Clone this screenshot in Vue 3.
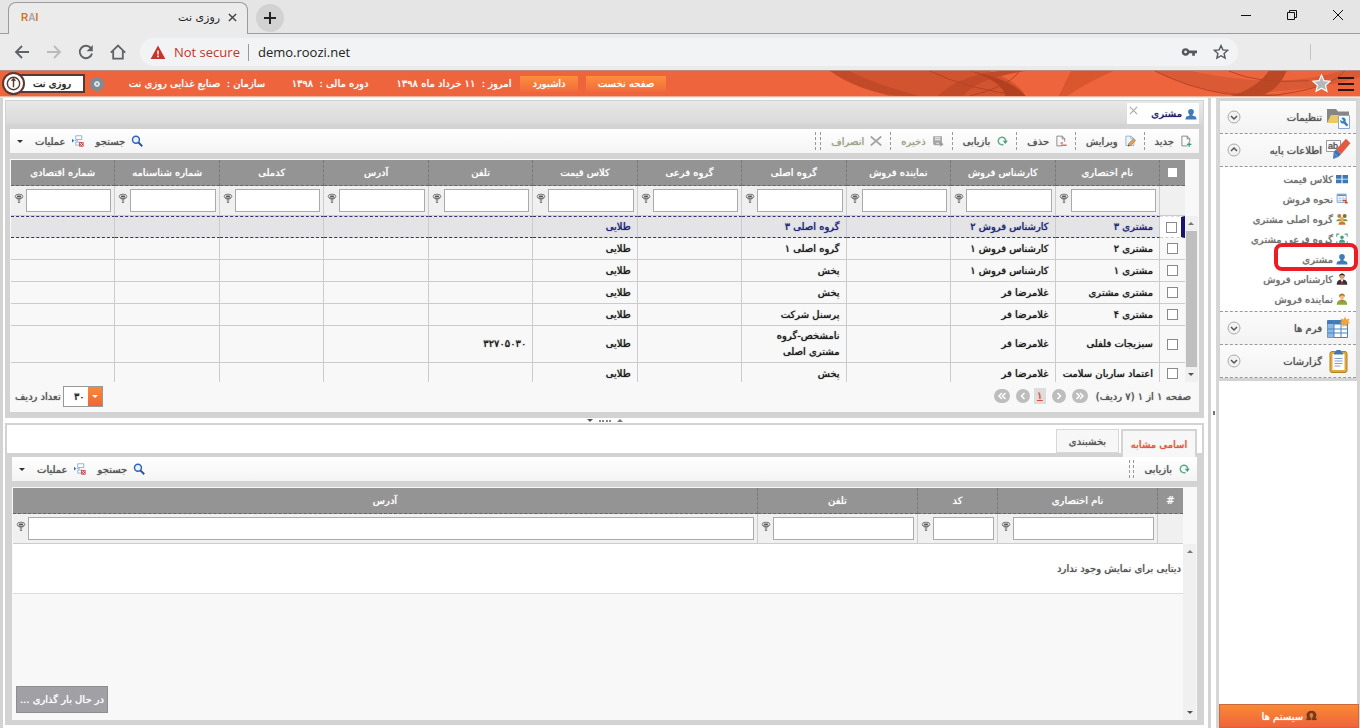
<script setup>
import { ref } from 'vue'

const icons = {
  back: '<path d="M15 8H2M8 2L2 8l6 6" fill="none" stroke="#5f6368" stroke-width="1.8"/>',
  forward: '<path d="M1 8h13M8 2l6 6-6 6" fill="none" stroke="#b8babc" stroke-width="1.8"/>',
  reload: '<path d="M13.2 4.6A6.2 6.2 0 1 0 14 9.5" fill="none" stroke="#5f6368" stroke-width="1.9"/><path d="M14.8 1v6.2H8.6z" fill="#5f6368"/>',
  home: '<path d="M.8 8.6L8 1.6l7.2 7M3.2 7v7.7h9.6V7" fill="none" stroke="#5f6368" stroke-width="1.8"/>',
  warning: '<path d="M8 1.5L15.4 15H.6z" fill="#c5352b"/><path d="M8 6.4v4M8 11.6v1.7" stroke="#fff" stroke-width="1.5"/>',
  key: '<path d="M4.6 4.2a3.8 3.8 0 1 0 3.6 5h3v2.6h2.7V9.2H16V6.6H8.2a3.8 3.8 0 0 0-3.6-2.4z" fill="#54585c"/><circle cx="4.6" cy="7.9" r="1.4" fill="#f1f3f4"/>',
  starLine: '<path d="M8 1.6l1.9 4.3 4.7.5-3.5 3.1 1 4.6L8 11.7l-4.1 2.4 1-4.6L1.4 6.4l4.7-.5z" fill="none" stroke="#54585c" stroke-width="1.4"/>',
  starFull: '<path d="M8 .9l2.1 4.7 5.2.5-3.9 3.4 1.2 5.1L8 11.9l-4.6 2.7 1.2-5.1L.7 6.1l5.2-.5z" fill="#b5b8bb" stroke="#fff" stroke-width="1"/>',
  user: '<circle cx="8" cy="5" r="3.8" fill="#3f7db8"/><path d="M6 7h4v3l4.6 1.6.9 3.6H.5l.9-3.6L6 10z" fill="#3f7db8"/>',
  add: '<path d="M10 14.5H2.5v-13h7.2l3.3 3.3v4.5M9.5 1.5v3.6H13" fill="none" stroke="#777" stroke-width="1.1"/><path d="M12.2 9.5v6M9.2 12.5h6" stroke="#3d9b6c" stroke-width="1.8"/>',
  edit: '<path d="M2.5 14V1.5h7L13 5v9z" fill="#eef5fc" stroke="#7ba3cf"/><path d="M9 1.5V5h4" fill="none" stroke="#7ba3cf"/><path d="M5.5 14.7l1-3.7 6.4-6 2.6 2.5-6.3 6.3z" fill="#e2a052" stroke="#9b6a34" stroke-width=".7"/><path d="M5.3 15l.6-2 1.6 1.3z" fill="#333"/>',
  remove: '<path d="M13 9V4.8L9.7 1.5H2.5v13H9M9.5 1.5v3.6H13" fill="none" stroke="#777" stroke-width="1.1"/><path d="M8 13.5h7.5M7.5 10.5h3" stroke="#e0704a" stroke-width="2"/>',
  refresh: '<path d="M10 12.6A5 5 0 1 1 13 8" fill="none" stroke="#5fae8d" stroke-width="2"/><path d="M9 7.5h6.8L12.4 12z" fill="#4d9c7b"/>',
  save: '<path d="M1.5 1.5h11.8v12H3l-1.5-1.4z" fill="#a6a6a6"/><path d="M4 3h7v4H4z" fill="#eee"/><path d="M4.5 5h6M5 9.5h5v3H5z" stroke="#999" fill="#ddd"/><path d="M11 9l4.5 3.2L11 15.5z" fill="#999"/>',
  cancel: '<path d="M1 2l14 12M15 2L1 14" stroke="#a5a5a5" stroke-width="2.2"/>',
  search: '<circle cx="6.6" cy="6.4" r="4.6" fill="#eaf3fc" stroke="#2f64ba" stroke-width="2"/><path d="M10 10l5 5" stroke="#2950a0" stroke-width="2.4"/>',
  actions: '<path d="M0 5l3 2.5L0 10z" fill="#3572b5"/><path d="M5 1h8v5H5zM5 9.5h6v4H5zM3.8 7.6H8" fill="#fff" stroke="#7c9cc4"/><path d="M9.5 9.5h6v6h-6z" fill="#c94444"/><path d="M10.8 10.8l3.5 3.5M14.3 10.8l-3.5 3.5" stroke="#fff"/>',
  funnel: '<ellipse cx="8" cy="4.6" rx="6.2" ry="3.6" fill="#ddd" stroke="#777" stroke-width="1.5"/><path d="M2.4 6.4L6.2 10v5h3.6v-5l3.8-3.6z" fill="#777"/><path d="M7.4 9.500h1.200v4.500h-1.200z" fill="#eee"/><path d="M5 4.4h6" stroke="#444" stroke-width="2"/>',
  price: '<path d="M0 2.5h7.3v5H0zM8.7 2.5H16v5H8.7zM0 8.8h7.3v5H0zM8.7 8.8H16v5H8.7z" fill="#3e78b3"/>',
  sellMode: '<path d="M1.5 1.5h12v11h-12z" fill="#fff" stroke="#5d88b8"/><path d="M2 3h11" stroke="#5d88b8" stroke-width="2"/><path d="M2 7h11M2 10h11M5.3 3v9.5M9.3 3v9.5" stroke="#9bb9d9" stroke-width=".8"/><path d="M9 10h4v3h2.6" fill="none" stroke="#d64532" stroke-width="1.8"/>',
  people: '<circle cx="4.4" cy="4" r="2.7" fill="#b7843e"/><circle cx="11.6" cy="4" r="2.7" fill="#8b6d30"/><path d="M.5 11c0-4 7.5-4 7.5 0zM8 11c0-4 7.5-4 7.5 0z" fill="#78a23c"/><circle cx="8" cy="8" r="2.7" fill="#e5ae5c"/><path d="M3.2 15.5c0-5.5 9.6-5.5 9.6 0z" fill="#d4743a"/>',
  subPeople: '<path d="M1 5V1.5h3.5M11.5 1.5H15V5M15 11v3.5h-3.5M4.5 14.5H1V11" fill="none" stroke="#5fa78e" stroke-width="1.5"/><circle cx="8" cy="5.8" r="2.4" fill="#4c9d80"/><path d="M3.8 13c0-5.6 8.4-5.6 8.4 0z" fill="#4c9d80"/>',
  expert: '<circle cx="8" cy="4.4" r="3.4" fill="#d69a72"/><path d="M4.3 4.5C3.8-.8 12.5-.8 11.8 4.5 10 2 6.5 2.3 4.3 4.5z" fill="#2b2020"/><path d="M1 15.5c0-5 2.3-7 7-7s7 2 7 7z" fill="#3b3036"/><path d="M6 8.6h4l-2 4z" fill="#fff"/><path d="M8 9.5l1.2 5.5H6.8z" fill="#c02f2f"/>',
  agent: '<circle cx="8" cy="5" r="3.3" fill="#f0bd83"/><path d="M4 5.4C3.4-.8 12.6-.8 12 5.4 10.5 2.4 6.7 2.8 4 5.4z" fill="#b5793a"/><path d="M1 15.5C1 11 3.5 9 8 9s7 2 7 6.5z" fill="#86aa3d"/><path d="M6 9h4l-2 3.6z" fill="#e2594a"/>',
  settings: '<path d="M1 4h9l2 2.5h11V18H1z" fill="#868686"/><path d="M1 18l4-8h10v8z" fill="#ecc95f"/><path d="M12.5 10.5h11v13h-11z" fill="#f8fbff" stroke="#8aa9cc"/><path d="M15.3 13.2a2.8 2.8 0 0 1 4.2 3.5l2.8 3.3-1.6 1.6-3-3.1a2.8 2.8 0 0 1-3.3-3.7l2 1.6 1.1-1z" fill="#3d7ab8"/>',
  base: '<path d="M.5 2.5h14v11H.5z" fill="#fff" stroke="#999"/><text x="2" y="11" direction="ltr" font-size="9" font-family="Liberation Sans" fill="#555">ab</text><path d="M20 .8l4.4 4.5-9.4 11-5-4.8z" fill="#e35a40"/><path d="M10 11.500l5 4.800-2.600 2.600-4.800-4.600z" fill="#3f73b3"/><path d="M7.600 14.300l4.800 4.600L7 21z" fill="#4b7fc0"/>',
  forms: '<path d="M1.5 4.5h20v17h-20z" fill="#fff" stroke="#4d83bd"/><path d="M1.5 4.5h20v4h-20z" fill="#3e7bbc"/><path d="M1.5 8.5h6.5v13H1.5z" fill="#8db9e6"/><path d="M1.5 13h20M1.5 17h20M8 4.5v17M15 4.5v17" stroke="#4d83bd"/><path d="M19 .5l1.4 3 3-1-1 3 1.6 1.5-3 .9.3 3.1L19 9.4 16.5 11l.2-3.1-3-.9 2-1.5-1-3 3 1z" fill="#f0a53a"/>',
  reports: '<rect x="4" y="2.5" width="17" height="21" rx="2" fill="#e0a93c" stroke="#b58124"/><path d="M6.5 5h12v16h-12z" fill="#fff"/><path d="M8.5 9.5h8M8.5 12h8M8.5 14.5h8M8.5 17h6" stroke="#7fa3cc"/><path d="M8 5.5c0-2.6 2-2.5 2.5-4.5h4c.5 2 2.500 1.900 2.500 4.500z" fill="#3f78b5"/>',
}

const activeItem = ref('مشتری')
const pageSize = ref('۳۰')

const baseItems = [
  { icon: 'price', title: 'کلاس قیمت' },
  { icon: 'sellMode', title: 'نحوه فروش' },
  { icon: 'people', title: 'گروه اصلی مشتری' },
  { icon: 'subPeople', title: 'گروه فرعی مشتری' },
  { icon: 'user', title: 'مشتری' },
  { icon: 'expert', title: 'کارشناس فروش' },
  { icon: 'agent', title: 'نماینده فروش' },
]

const menu = [
  { icon: 'settings', title: 'تنظیمات' },
  { icon: 'base', title: 'اطلاعات پایه', items: baseItems },
  { icon: 'forms', title: 'فرم ها' },
  { icon: 'reports', title: 'گزارشات' },
]

const tools = [
  { icon: 'add', title: 'جدید' },
  { icon: 'edit', title: 'ویرایش' },
  { icon: 'remove', title: 'حذف' },
  { icon: 'refresh', title: 'بازیابی' },
  { icon: 'save', title: 'ذخیره', disabled: true },
  { icon: 'cancel', title: 'انصراف', disabled: true },
]

const columns = ['نام اختصاری', 'کارشناس فروش', 'نماینده فروش', 'گروه اصلی', 'گروه فرعی', 'کلاس قیمت', 'تلفن', 'آدرس', 'کدملی', 'شماره شناسنامه', 'شماره اقتصادی']

// name, expert, main group, phone
const rows = [
  ['مشتری ۳', 'کارشناس فروش ۲', 'گروه اصلی ۳', ''],
  ['مشتری ۲', 'کارشناس فروش ۱', 'گروه اصلی ۱', ''],
  ['مشتری ۱', 'کارشناس فروش ۱', 'پخش', ''],
  ['مشتری مشتری', 'غلامرضا فر', 'پخش', ''],
  ['مشتری ۴', 'غلامرضا فر', 'پرسنل شرکت', ''],
  ['سبزیجات فلفلی', 'غلامرضا فر', 'نامشخص-گروه مشتری اصلی', '۳۲۷۰۵۰۳۰'],
  ['اعتماد ساربان سلامت', 'غلامرضا فر', 'پخش', ''],
].map(([name, expert, group, phone]) => [name, expert, '', group, '', 'طلایی', phone, '', '', '', ''])

const similarColumns = ['نام اختصاری', 'کد', 'تلفن', 'آدرس']
</script>

<template>
  <div class="window">
    <header class="browser">
      <div class="tabStrip">
        <div class="browserTab">
          <span class="favicon">R<i>A</i>I</span>
          <span class="tabTitle" dir="rtl">روزی نت</span>
          <button class="closeTab" aria-label="Close tab">
            <svg viewBox="0 0 10 10"><path d="M1 1l8 8M9 1L1 9" stroke="#444" stroke-width="1.6" /></svg>
          </button>
        </div>
        <button class="newTab" aria-label="New tab">
          <svg viewBox="0 0 12 12"><path d="M6 0v12M0 6h12" stroke="#222" stroke-width="2" /></svg>
        </button>
        <div class="windowButtons">
          <button aria-label="Minimize"><svg viewBox="0 0 12 12"><path d="M1 6.5h10" stroke="#111" /></svg></button>
          <button aria-label="Restore"><svg viewBox="0 0 12 12"><path d="M1.5 3.5h7v7h-7zM3.5 3.5v-2h7v7h-2" fill="none" stroke="#111" /></svg></button>
          <button aria-label="Close"><svg viewBox="0 0 12 12"><path d="M1 1l10 10M11 1L1 11" stroke="#111" /></svg></button>
        </div>
      </div>
      <div class="addressRow">
        <button v-for="name in ['back', 'forward', 'reload', 'home']" :key="name" class="navButton" :aria-label="name">
          <svg viewBox="0 0 16 16" v-html="icons[name]"></svg>
        </button>
        <div class="omnibox">
          <svg viewBox="0 0 16 16" v-html="icons.warning"></svg>
          <label class="notSecure" for="url">Not secure</label>
          <input id="url" class="url" type="text" value="demo.roozi.net">
          <svg class="key" viewBox="0 0 16 16" v-html="icons.key"></svg>
          <svg viewBox="0 0 16 16" v-html="icons.starLine"></svg>
        </div>
        <span class="profileLine"></span>
      </div>
    </header>

    <div class="topbar">
      <svg class="waves" viewBox="0 0 532 26" preserveAspectRatio="none">
        <path d="M0 0h160q30 12 36 26H60Q30 18 0 0z" fill="#d2532f" />
        <path d="M0 0q30 22 70 26h20Q40 12 20 0zM108 26Q130 4 170 0h26q-50 8-62 26z" fill="#c34a29" />
        <path d="M140 0q42 8 56 26h-20Q172 10 140 0zM230 26l12-26h10l-14 26z" fill="#b3411f" />
        <path d="M100 0q40 20 96 26M140 26Q180 16 190 0" fill="none" stroke="#b04422" />
        <path d="M242 0h42q-26 12-46 26h-8z" fill="#d9562f" />
        <path d="M326 0q60 30 130 26-70-6-100-26z" fill="#cf502d" />
        <path d="M326 0q50 28 110 22 60-4 96-16V0h-20q-60 20-150 0z" fill="#da5a35" />
        <path d="M402 26Q428 18 440 0h18q-8 20-26 26z" fill="#bb4725" />
        <path d="M326 0q70 36 140 22 40-8 50-22M400 0q30 14 80 10" fill="none" stroke="#b34626" />
      </svg>
      <div class="brand">
        <span class="power"><svg viewBox="0 0 20 20"><circle cx="10" cy="10" r="6.500" fill="none" stroke="#5a3832" stroke-width="1.5" /><path d="M10 5v9M8 7l2-2 2 2" fill="none" stroke="#5a3832" stroke-width="1.5" /></svg></span>
        <span class="brandName">روزی نت</span>
      </div>
      <span class="gear"></span>
      <span class="info org">سازمان :&nbsp; صنایع غذایی روزی نت</span>
      <span class="info year">دوره مالی :&nbsp; ۱۳۹۸</span>
      <span class="info today">امروز :&nbsp; ۱۱ خرداد ماه ۱۳۹۸</span>
      <button class="topButton">داشبورد</button>
      <button class="topButton wide">صفحه نخست</button>
      <button class="favorite" aria-label="Favorite"><svg viewBox="0 0 16 16" v-html="icons.starFull"></svg></button>
      <button class="burger" aria-label="Menu"><i></i><i></i><i></i></button>
    </div>

    <div class="workspace">
      <aside class="sidebar">
        <nav class="menu">
          <template v-for="group in menu" :key="group.title">
            <button class="group">
              <svg class="groupIcon" viewBox="0 0 25 25" v-html="icons[group.icon]"></svg>
              <span>{{ group.title }}</span>
              <svg class="toggle" :class="{ open: group.items }" viewBox="0 0 14 14"><circle cx="7" cy="7" r="6" fill="#f2f2f2" stroke="#aaa" /><path d="M4 6l3 3 3-3" fill="none" stroke="#555" stroke-width="1.5" /></svg>
            </button>
            <ul v-if="group.items" class="subMenu">
              <li v-for="item in group.items" :key="item.title" :class="{ marked: item.title === activeItem }">
                <a href="#" @click.prevent="activeItem = item.title"><svg viewBox="0 0 16 16" v-html="icons[item.icon]"></svg>{{ item.title }}</a>
              </li>
            </ul>
          </template>
        </nav>
        <button class="systems"><b>Ω</b> سیستم ها</button>
      </aside>

      <div class="sideSplitter"><i></i></div>

      <main class="content">
        <section class="panel upper">
          <div class="docTabs">
            <div class="docTab">
              <svg viewBox="0 0 16 16" v-html="icons.user"></svg>
              <span>مشتری</span>
              <button aria-label="بستن"><svg viewBox="0 0 10 10"><path d="M1 1l8 8M9 1L1 9" stroke="#aaa" stroke-width="1.3" /></svg></button>
            </div>
          </div>
          <div class="frame">
            <div class="toolbar">
              <button v-for="tool in tools" :key="tool.title" class="tool" :disabled="tool.disabled">
                <svg viewBox="0 0 16 16" v-html="icons[tool.icon]"></svg>{{ tool.title }}
              </button>
              <span class="grip"></span>
              <div class="leftTools">
                <button class="tool plain"><svg viewBox="0 0 16 16" v-html="icons.search"></svg>جستجو</button>
                <button class="tool plain"><svg viewBox="0 0 16 16" v-html="icons.actions"></svg>عملیات<i class="caret"></i></button>
              </div>
            </div>

            <div class="gridBox">
              <table class="grid headGrid">
                <colgroup><col class="checkCol"><col v-for="c in columns" :key="c"></colgroup>
                <thead>
                  <tr>
                    <th><input type="checkbox" class="check solid" aria-label="انتخاب همه"></th>
                    <th v-for="c in columns" :key="c">{{ c }}</th>
                  </tr>
                  <tr class="filters">
                    <td></td>
                    <td v-for="c in columns" :key="c">
                      <div class="filter"><input type="text" :aria-label="c"><svg viewBox="0 0 16 16" v-html="icons.funnel"></svg></div>
                    </td>
                  </tr>
                </thead>
              </table>
              <div class="scrollArea">
                <div class="scrollbar"><i class="up"></i><span class="thumb"></span><i class="down"></i></div>
                <div class="rowsClip">
                  <table class="grid bodyGrid">
                    <colgroup><col class="checkCol"><col v-for="c in columns" :key="c"></colgroup>
                    <tbody>
                      <tr v-for="(row, index) in rows" :key="index" :class="{ selected: index === 0 }">
                        <td class="checkCell"><input type="checkbox" class="check" :aria-label="row[0]"></td>
                        <td v-for="(cell, i) in row" :key="i">{{ cell }}</td>
                      </tr>
                    </tbody>
                  </table>
                </div>
              </div>
              <footer class="pager">
                <span class="pageInfo">صفحه ۱ از ۱ (۷ ردیف)</span>
                <button class="pageButton" aria-label="صفحه اول"><svg viewBox="0 0 12 12"><path d="M2.5 3l3 3-3 3M6 3l3 3-3 3" /></svg></button>
                <button class="pageButton small" aria-label="صفحه قبل"><svg viewBox="0 0 12 12"><path d="M4.5 3l3 3-3 3" /></svg></button>
                <a href="#" class="pageNumber">۱</a>
                <button class="pageButton small" aria-label="صفحه بعد"><svg viewBox="0 0 12 12"><path d="M7.5 3l-3 3 3 3" /></svg></button>
                <button class="pageButton" aria-label="صفحه آخر"><svg viewBox="0 0 12 12"><path d="M6 3L3 6l3 3M9.5 3l-3 3 3 3" /></svg></button>
                <div class="pageSize">
                  <span class="selectBox">
                    <select id="pageSize" v-model="pageSize"><option>۳۰</option><option>۵۰</option></select>
                    <i class="selectArrow"></i>
                  </span>
                  <label for="pageSize">تعداد ردیف</label>
                </div>
              </footer>
            </div>
          </div>
        </section>

        <div class="splitter"><i class="up"></i><span></span><i class="down"></i></div>

        <section class="panel lower">
          <div class="lowerTabs">
            <button class="lowerTab active">اسامی مشابه</button>
            <button class="lowerTab">بخشبندی</button>
          </div>
          <div class="frame lowerFrame">
            <div class="toolbar">
              <button class="tool plain"><svg viewBox="0 0 16 16" v-html="icons.refresh"></svg>بازیابی</button>
              <span class="grip double"></span>
              <div class="leftTools">
                <button class="tool plain"><svg viewBox="0 0 16 16" v-html="icons.search"></svg>جستجو</button>
                <button class="tool plain"><svg viewBox="0 0 16 16" v-html="icons.actions"></svg>عملیات<i class="caret"></i></button>
              </div>
            </div>
            <div class="gridBox lowerBox">
              <table class="grid headGrid">
                <colgroup><col class="checkCol"><col class="nameCol"><col class="codeCol"><col class="nameCol"><col></colgroup>
                <thead>
                  <tr><th>#</th><th v-for="c in similarColumns" :key="c">{{ c }}</th></tr>
                  <tr class="filters">
                    <td></td>
                    <td v-for="c in similarColumns" :key="c">
                      <div class="filter"><input type="text" :aria-label="c"><svg viewBox="0 0 16 16" v-html="icons.funnel"></svg></div>
                    </td>
                  </tr>
                </thead>
              </table>
              <div class="scrollArea">
                <div class="scrollbar wideBar"><i class="up"></i><i class="down"></i></div>
                <p class="empty">دیتایی برای نمایش وجود ندارد</p>
              </div>
            </div>
          </div>
          <div class="loading">در حال بار گذاری ...</div>
        </section>
      </main>
    </div>
  </div>
</template>

<style>
body {
  margin: 0;
  overflow: hidden;
}
</style>

<style scoped>
*,
*::before,
*::after {
  box-sizing: border-box;
}

.window {
  height: 100vh;
  display: flex;
  flex-direction: column;
  background: #fff;
  font-family: "DejaVu Sans", sans-serif;
  font-size: 10px;
  color: #555;
}

.topbar,
.workspace {
  text-shadow: 0 0 1px currentColor;
}

button {
  font: inherit;
  color: inherit;
  text-shadow: inherit;
  background: none;
  border: 0;
  padding: 0;
}

svg {
  display: block;
  flex: none;
}

/* browser chrome */
.browser {
  flex: none;
  background: #ebebeb;
}

.tabStrip {
  height: 34px;
  padding: 2px 16px 0 8px;
  display: flex;
  align-items: center;
  background: #e5e5e5;
  border-bottom: 1px solid #9b9ba0;
}

.browserTab {
  width: 240px;
  height: 32px;
  align-self: flex-start;
  display: flex;
  align-items: center;
  padding: 0 10px 2px 12px;
  background: #ebebeb;
  border: 1px solid #9b9ba0;
  border-bottom: 0;
  border-radius: 8px 8px 0 0;
}

.favicon {
  font: bold 10px "Liberation Sans", sans-serif;
  color: #d9731c;
}

.favicon i {
  color: #aaa;
  font-style: normal;
}

.tabTitle {
  margin-left: auto;
  font-size: 11px;
  color: #222;
}

.closeTab {
  margin-left: 8px;
}

.closeTab svg {
  width: 9px;
  height: 9px;
}

.newTab {
  width: 28px;
  height: 28px;
  margin-left: 8px;
  border-radius: 50%;
  background: #d2d2d2;
  display: grid;
  place-items: center;
}

.newTab svg {
  width: 12px;
  height: 12px;
}

.windowButtons {
  margin-left: auto;
  display: flex;
  gap: 34px;
  padding-bottom: 6px;
}

.windowButtons svg {
  width: 12px;
  height: 12px;
}

.addressRow {
  height: 36px;
  display: flex;
  align-items: center;
  padding-left: 14px;
}

.navButton {
  margin-right: 16px;
}

.navButton svg {
  width: 16px;
  height: 16px;
}

.omnibox {
  flex: 1;
  height: 28px;
  margin-left: -2px;
  padding: 0 9px 0 10px;
  display: flex;
  align-items: center;
  background: #f1f3f4;
  border-radius: 14px;
  font: 13px "Open Sans", sans-serif;
}

.omnibox svg {
  width: 16px;
  height: 16px;
}

.notSecure {
  margin-left: 8px;
  padding-right: 8px;
  border-right: 1px solid #999;
  line-height: 17px;
  color: #c5352b;
}

.url {
  flex: 1;
  margin-left: 9px;
  border: 0;
  padding: 0;
  background: none;
  font: inherit;
  color: #222;
}

.omnibox .key {
  margin-right: 16px;
}

.profileLine {
  width: 1px;
  height: 16px;
  margin: 0 49px 0 72px;
  background: #c4c4c8;
}

/* orange bar */
.topbar {
  flex: none;
  height: 27px;
  display: flex;
  align-items: center;
  position: relative;
  padding: 0 6px 0 2px;
  background: #ee643c;
  border-top: 1px solid #b9897c;
  border-bottom: 1px solid #e9b5a4;
  color: #fff;
}

.topbar > * {
  position: relative;
}

.topbar .waves {
  position: absolute;
  top: 0;
  right: 0;
  width: 39%;
  height: 25px;
}

.brand {
  width: 83px;
  display: flex;
  align-items: center;
}

.power {
  z-index: 1;
  width: 23px;
  height: 23px;
  border: 2px solid #5a3832;
  border-radius: 50%;
  background: #fff;
}

.brandName {
  flex: 1;
  height: 19px;
  margin-left: -6px;
  border: 2px solid #5a3832;
  background: #fff;
  color: #222;
  line-height: 15px;
  text-align: center;
}

.gear {
  width: 14px;
  height: 14px;
  margin: 0 24px 0 5px;
  border: 4px solid #7d8b96;
  border-radius: 50%;
  background: #8b8f90;
  box-shadow: inset 0 0 0 2px #dce4ea;
}

.info {
  direction: rtl;
  white-space: nowrap;
  text-align: center;
}

.org {
  width: 138px;
}

.year {
  width: 80px;
  margin-left: 24px;
}

.today {
  width: 120px;
  margin: 0 6px 0 24px;
}

.topButton {
  width: 58px;
  height: 16px;
  margin-right: 8px;
  background: linear-gradient(#fb8f3d, #f2693b);
}

.topButton.wide {
  width: 80px;
}

.favorite {
  margin-left: auto;
}

.favorite svg {
  width: 19px;
  height: 19px;
}

.burger {
  width: 16px;
  margin-left: 7px;
  display: grid;
  gap: 4px;
}

.burger i {
  height: 2px;
  background: #2d1712;
}

/* layout */
.workspace {
  flex: 1;
  min-height: 0;
  display: flex;
  direction: rtl;
  border-top: 1px solid #e8e8e8;
}

.sidebar {
  width: 144px;
  flex: none;
  display: flex;
  flex-direction: column;
  border: solid #d6d6d6;
  border-width: 0 3px;
}

.menu {
  border: solid #d3d3d3;
  border-width: 3px 1px;
}

.group {
  width: 100%;
  height: 33px;
  padding: 0 5px 0 7px;
  display: flex;
  align-items: center;
  background: linear-gradient(#fbfbfb, #f3f3f3);
  border-bottom: 1px dashed #999;
}

.groupIcon {
  width: 25px;
  height: 25px;
  margin-left: 4px;
}

.toggle {
  width: 14px;
  height: 14px;
  margin-right: auto;
}

.toggle.open {
  transform: rotate(180deg);
}

.subMenu {
  list-style: none;
  margin: 0;
  padding: 2px 0;
  border-bottom: 1px dashed #999;
}

.subMenu li {
  height: 20px;
  padding-right: 8px;
  position: relative;
}

.subMenu a {
  display: flex;
  align-items: center;
  gap: 3px;
  height: 20px;
  color: #707070;
  text-decoration: none;
  white-space: nowrap;
}

.subMenu svg {
  width: 12px;
  height: 12px;
}

.marked::after {
  content: "";
  position: absolute;
  z-index: 2;
  top: -6px;
  right: -2px;
  width: 84px;
  height: 28px;
  border: 4px solid #ea1c24;
  border-radius: 8px;
}

.systems {
  height: 24px;
  margin: auto -2px 0 0;
  background: linear-gradient(#f98a35, #f0633b);
  border: 1px solid #c96a3c;
  color: #fff;
}

.systems b {
  color: #70381c;
  font-size: 12px;
}

.sideSplitter {
  width: 8px;
  flex: none;
  display: flex;
  align-items: center;
  justify-content: center;
  border-left: 3px solid #d3d3d3;
}

.sideSplitter i {
  width: 2px;
  height: 4px;
  background: #777;
}

.content {
  flex: 1;
  min-width: 0;
  display: flex;
  flex-direction: column;
  padding: 2px 4px 3px 2px;
  border-left: 3px solid #d3d3d3;
}

.panel {
  border: 1px solid #d3d3d3;
}

.docTabs {
  height: 23px;
  display: flex;
  padding: 2px 4px 0;
  background: linear-gradient(#e8e8e8, #d9d9d9);
}

.docTab {
  width: 72px;
  display: flex;
  align-items: center;
  padding: 0 2px;
  background: #fff;
  color: #1f1b69;
}

.docTab > svg {
  width: 12px;
  height: 12px;
  margin-left: 3px;
}

.docTab button {
  margin: 0 auto 7px 0;
}

.docTab button svg {
  width: 9px;
  height: 9px;
}

.frame {
  padding: 5px 4px;
  background: #d3d3d3;
}

.toolbar {
  height: 24px;
  display: flex;
  align-items: center;
  padding: 0 7px;
  background: linear-gradient(#fff, #f4f4f4);
}

.tool {
  height: 18px;
  display: flex;
  align-items: center;
  gap: 6px;
  padding: 0 8px 0 10px;
  border-left: 1px dashed #999;
}

.tool:first-child {
  padding-right: 0;
}

.tool:disabled {
  color: #9ba58a;
}

.tool.plain {
  border-left: 0;
}

.tool svg {
  width: 12px;
  height: 12px;
}

.grip {
  width: 5px;
  height: 18px;
  border-left: 1px dashed #999;
}

.grip.double {
  border-right: 1px dashed #999;
}

.leftTools {
  margin-right: auto;
  display: flex;
}

.leftTools .tool {
  padding: 0 12px 0 0;
}

.caret {
  margin-right: 6px;
  border: 3px solid transparent;
  border-top-color: #333;
  border-bottom: 0;
}

/* grids */
.gridBox {
  margin-top: 6px;
  padding: 1px 1px 0;
  background: #f8f8f8;
}

.grid {
  table-layout: fixed;
  border-collapse: separate;
  border-spacing: 0;
}

.headGrid {
  width: calc(100% - 13px);
  margin-right: 13px;
}

.bodyGrid {
  width: 100%;
}

.checkCol {
  width: 25px;
}

.nameCol {
  width: 160px;
}

.codeCol {
  width: 80px;
}

.grid th {
  height: 26px;
  padding: 0;
  background: #949494;
  color: #fff;
  font-weight: normal;
  border-bottom: 1px dashed #666;
}

.grid th + th {
  border-right: 1px dashed #777;
}

.grid td {
  padding: 0 6px;
  border-bottom: 1px solid #ccc;
}

.grid td + td {
  border-right: 1px solid #ccc;
}

.grid .filters td {
  height: 30px;
  padding: 0 3px;
  background: #f0f0f0;
}

.filter {
  display: flex;
  align-items: center;
  gap: 2px;
}

.filter input {
  flex: 1;
  min-width: 0;
  height: 23px;
  border: 1px solid #aaa;
  background: #fff;
}

.filter svg {
  width: 10px;
  height: 11px;
  margin-bottom: 5px;
}

.check {
  appearance: none;
  display: block;
  width: 11px;
  height: 11px;
  margin: 0 auto;
  border: 1px solid #8a8a8a;
  background: #fff;
}

.check.solid {
  width: 9px;
  height: 9px;
  border-color: #fff;
}

.scrollArea {
  display: flex;
}

.rowsClip {
  flex: 1;
  min-width: 0;
  height: 166px;
  overflow: hidden;
}

.bodyGrid td {
  height: 22px;
  color: #1c1c1c;
  line-height: 16px;
}

.grid .checkCell {
  padding: 0 2px;
}

.bodyGrid tr:nth-child(6) td {
  height: 37px;
}

.bodyGrid .selected td {
  background: #e4e4e6;
  color: #1e2478;
  border-top: 1px dashed #33336f;
  border-bottom: 1px dashed #33336f;
}

.bodyGrid .selected .checkCell {
  padding-right: 0;
  background: #fff;
  border-top-color: #ddd;
  border-bottom-color: #ccc;
  border-right: 4px solid #16166e;
}

.scrollbar {
  width: 13px;
  flex: none;
  display: flex;
  flex-direction: column;
  align-items: center;
  justify-content: space-between;
  padding: 6px 1px 6px 0;
  background: #f0f0f0;
}

.thumb {
  flex: 1;
  width: 11px;
  margin: 6px 0;
  background: #bfbfbf;
}

.up,
.down {
  border: 3px solid transparent;
}

.up {
  border-top: 0;
  border-bottom-color: #777;
}

.down {
  border-bottom: 0;
  border-top-color: #555;
}

.pager {
  height: 30px;
  display: flex;
  align-items: center;
  padding: 0 7px 2px 4px;
}

.pageInfo {
  margin-left: 8px;
}

.pageButton {
  width: 16px;
  height: 14px;
  margin-left: 6px;
  border-radius: 7px;
  background: #bdbdbd;
}

.pageButton.small {
  width: 14px;
}

.pageButton svg {
  width: 12px;
  height: 12px;
  margin: 0 auto;
  fill: none;
  stroke: #fff;
  stroke-width: 1.5;
}

.pageNumber {
  width: 12px;
  height: 16px;
  margin-left: 4px;
  background: #ddd;
  color: #dd4b39;
  line-height: 16px;
  text-align: center;
}

.pageSize {
  margin-right: auto;
  display: flex;
  align-items: center;
}

.selectBox {
  position: relative;
  margin-left: 2px;
}

.selectBox select {
  appearance: none;
  display: block;
  width: 40px;
  height: 21px;
  padding: 0 17px 0 0;
  border: 1px solid #999;
  border-radius: 0;
  background: #fff;
  font: inherit;
  color: #222;
  text-shadow: inherit;
}

.selectArrow {
  position: absolute;
  top: 1px;
  right: 1px;
  width: 14px;
  height: 19px;
  background: linear-gradient(#f98a35, #f0633b);
  pointer-events: none;
}

.selectArrow::after {
  content: "";
  position: absolute;
  top: 8px;
  left: 4px;
  border: 3px solid transparent;
  border-top-color: #fff;
  border-bottom: 0;
}

.splitter {
  height: 5px;
  flex: none;
  display: flex;
  align-items: center;
  justify-content: center;
  gap: 6px;
}

.splitter span {
  width: 12px;
  border-top: 2px dotted #888;
}

/* lower panel */
.lower {
  flex: 1;
  min-height: 0;
  display: flex;
  flex-direction: column;
  position: relative;
  border-width: 2px;
}

.lowerTabs {
  height: 32px;
  flex: none;
  display: flex;
  align-items: flex-start;
  gap: 2px;
  padding: 4px 5px 0;
  border-bottom: 4px solid #d3d3d3;
}

.lowerTab {
  width: 63px;
  height: 24px;
  background: #f7f7f7;
  border: 1px solid #d8d8d8;
}

.lowerTab.active {
  width: 76px;
  height: 28px;
  border: 2px solid #d3d3d3;
  border-bottom: 0;
  color: #e2553c;
}

.lowerFrame {
  flex: 1;
  min-height: 0;
  display: flex;
  flex-direction: column;
  padding: 0 5px 3px;
}

.lowerFrame .toolbar {
  flex: none;
}

.lowerBox {
  flex: 1;
  min-height: 0;
  display: flex;
  flex-direction: column;
}

.lowerBox .headGrid {
  flex: none;
}

.lowerBox .scrollArea {
  flex: 1;
}

.wideBar {
  padding: 6px 0;
}

.empty {
  flex: 1;
  height: 50px;
  margin: 0;
  padding: 0 2px;
  background: #fff;
  border-bottom: 1px solid #ddd;
  line-height: 49px;
}

.loading {
  position: absolute;
  left: 9px;
  bottom: 10px;
  width: 92px;
  height: 27px;
  background: #a0a0a5;
  border: 1px solid #8d8d92;
  color: #fff;
  line-height: 25px;
  text-align: center;
}
</style>
